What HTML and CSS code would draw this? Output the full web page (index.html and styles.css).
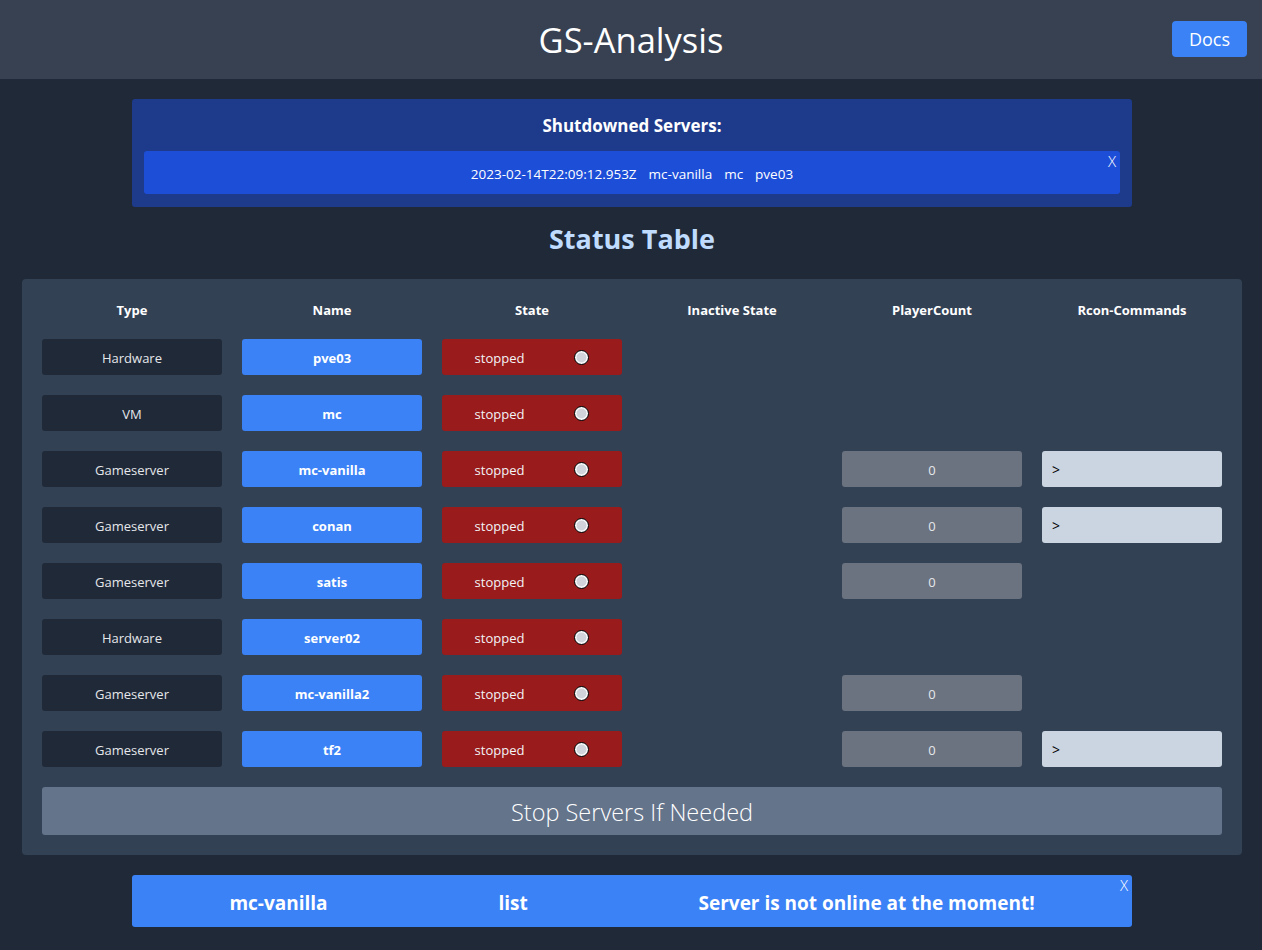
FILE: index.html
```html
<!DOCTYPE html>
<html>
<head>
<meta charset="utf-8">
<link rel="stylesheet" href="styles.css">
</head>
<body>
<header class="topbar">
  <h1 class="title">GS-Analysis</h1>
  <button class="docs">Docs</button>
</header>
<main class="main">
  <section class="shutdown">
    <h2 class="shutdown-title">Shutdowned Servers:</h2>
    <div class="shutdown-item">
      <span>2023-02-14T22:09:12.953Z</span><span>mc-vanilla</span><span>mc</span><span>pve03</span>
      <span class="close close-a">X</span>
    </div>
  </section>
  <h2 class="status-title">Status Table</h2>
  <section class="table">
    <div class="grid">
      <div class="th">Type</div><div class="th">Name</div><div class="th">State</div><div class="th">Inactive State</div><div class="th">PlayerCount</div><div class="th">Rcon-Commands</div>

      <div class="cell type">Hardware</div><div class="cell name">pve03</div><div class="cell state"><span>stopped</span><i class="dot"></i></div><div></div><div></div><div></div>

      <div class="cell type">VM</div><div class="cell name">mc</div><div class="cell state"><span>stopped</span><i class="dot"></i></div><div></div><div></div><div></div>

      <div class="cell type">Gameserver</div><div class="cell name">mc-vanilla</div><div class="cell state"><span>stopped</span><i class="dot"></i></div><div></div><div class="cell count">0</div><input class="cell rcon" placeholder="&gt;">

      <div class="cell type">Gameserver</div><div class="cell name">conan</div><div class="cell state"><span>stopped</span><i class="dot"></i></div><div></div><div class="cell count">0</div><input class="cell rcon" placeholder="&gt;">

      <div class="cell type">Gameserver</div><div class="cell name">satis</div><div class="cell state"><span>stopped</span><i class="dot"></i></div><div></div><div class="cell count">0</div><div></div>

      <div class="cell type">Hardware</div><div class="cell name">server02</div><div class="cell state"><span>stopped</span><i class="dot"></i></div><div></div><div></div><div></div>

      <div class="cell type">Gameserver</div><div class="cell name">mc-vanilla2</div><div class="cell state"><span>stopped</span><i class="dot"></i></div><div></div><div class="cell count">0</div><div></div>

      <div class="cell type">Gameserver</div><div class="cell name">tf2</div><div class="cell state"><span>stopped</span><i class="dot"></i></div><div></div><div class="cell count">0</div><input class="cell rcon" placeholder="&gt;">
    </div>
    <button class="stop">Stop Servers If Needed</button>
  </section>
  <section class="notice">
    <span>mc-vanilla</span><span>list</span><span>Server is not online at the moment!</span>
    <span class="close close-b">X</span>
  </section>
</main>
</body>
</html>
```

FILE: styles.css
```css
* { box-sizing: border-box; }
html, body { margin: 0; padding: 0; }
body {
  background: #1f2937;
  color: #fff;
  font-family: "Open Sans", "Noto Sans", sans-serif;
  width: 1262px;
  height: 950px;
  overflow: hidden;
}
.topbar {
  position: relative;
  height: 79px;
  background: #374151;
  display: flex;
  align-items: center;
  justify-content: center;
}
.title {
  margin: 0;
  font-size: 34.5px;
  font-weight: 400;
}
.docs {
  position: absolute;
  right: 15px;
  top: 21px;
  width: 75px;
  height: 36px;
  border: 0;
  border-radius: 4px;
  background: #3b82f6;
  color: #fff;
  font-family: inherit;
  font-size: 18px;
}
.main {
  display: flex;
  flex-direction: column;
  align-items: center;
  padding-top: 20px;
  padding-left: 2px;
}
.shutdown {
  width: 1000px;
  background: #1e3a8a;
  border-radius: 3px;
  padding: 16px 12px 13px;
}
.shutdown-title {
  margin: 0 0 14px;
  text-align: center;
  font-size: 17px;
  font-weight: 700;
  line-height: 22px;
}
.shutdown-item {
  position: relative;
  height: 43px;
  padding-top: 2px;
  background: #1d4ed8;
  border-radius: 3px;
  display: flex;
  justify-content: center;
  align-items: center;
  gap: 12px;
  font-size: 13.5px;
}
.close {
  position: absolute;
  font-size: 15px;
  font-weight: 300;
  color: #fff;
  line-height: 1;
}
.close-a { right: 4px; top: 3px; }
.close-b { right: 4px; top: 3px; }
.status-title {
  margin: 14px 0 22px;
  font-size: 27px;
  font-weight: 700;
  color: #bfdbfe;
  line-height: 36px;
}
.table {
  width: 1220px;
  background: #334155;
  border-radius: 4px;
  padding: 20px;
}
.grid {
  display: grid;
  grid-template-columns: repeat(6, 180px);
  grid-auto-rows: 36px;
  grid-template-rows: 20px;
  gap: 20px;
}
.th {
  text-align: center;
  font-size: 13px;
  font-weight: 700;
  line-height: 22px;
}
.cell {
  border-radius: 3px;
  font-size: 13px;
  display: flex;
  align-items: center;
  justify-content: center;
  padding-top: 1px;
}
.type { background: #1f2937; color: #e5e7eb; }
.name { background: #3b82f6; font-weight: 700; }
.state {
  background: #991b1b;
  justify-content: center;
  gap: 50px;
  color: #f3f4f6;
}
.dot {
  width: 15px;
  height: 15px;
  border-radius: 50%;
  background: #d1d5db;
  border: 1px solid #000;
  box-shadow: inset 0 0 0 1.5px #f9fafb;
}
.count { background: #6b7280; color: #e5e7eb; }
.rcon {
  border: 0;
  background: #cbd5e1;
  padding: 1px 10px 0;
  font-family: inherit;
  font-size: 14px;
  justify-content: flex-start;
  outline: none;
}
.rcon::placeholder { color: #000; }
.stop {
  display: block;
  width: 100%;
  height: 48px;
  margin-top: 20px;
  padding-top: 2px;
  border: 0;
  border-radius: 3px;
  background: #64748b;
  color: #fff;
  font-family: inherit;
  font-size: 23.5px;
  font-weight: 300;
}
.notice {
  position: relative;
  margin-top: 20px;
  width: 1000px;
  height: 52px;
  background: #3b82f6;
  border-radius: 3px;
  display: flex;
  align-items: center;
  justify-content: space-around;
  padding: 3px 12px 0;
  font-size: 19px;
  font-weight: 700;
}
```
